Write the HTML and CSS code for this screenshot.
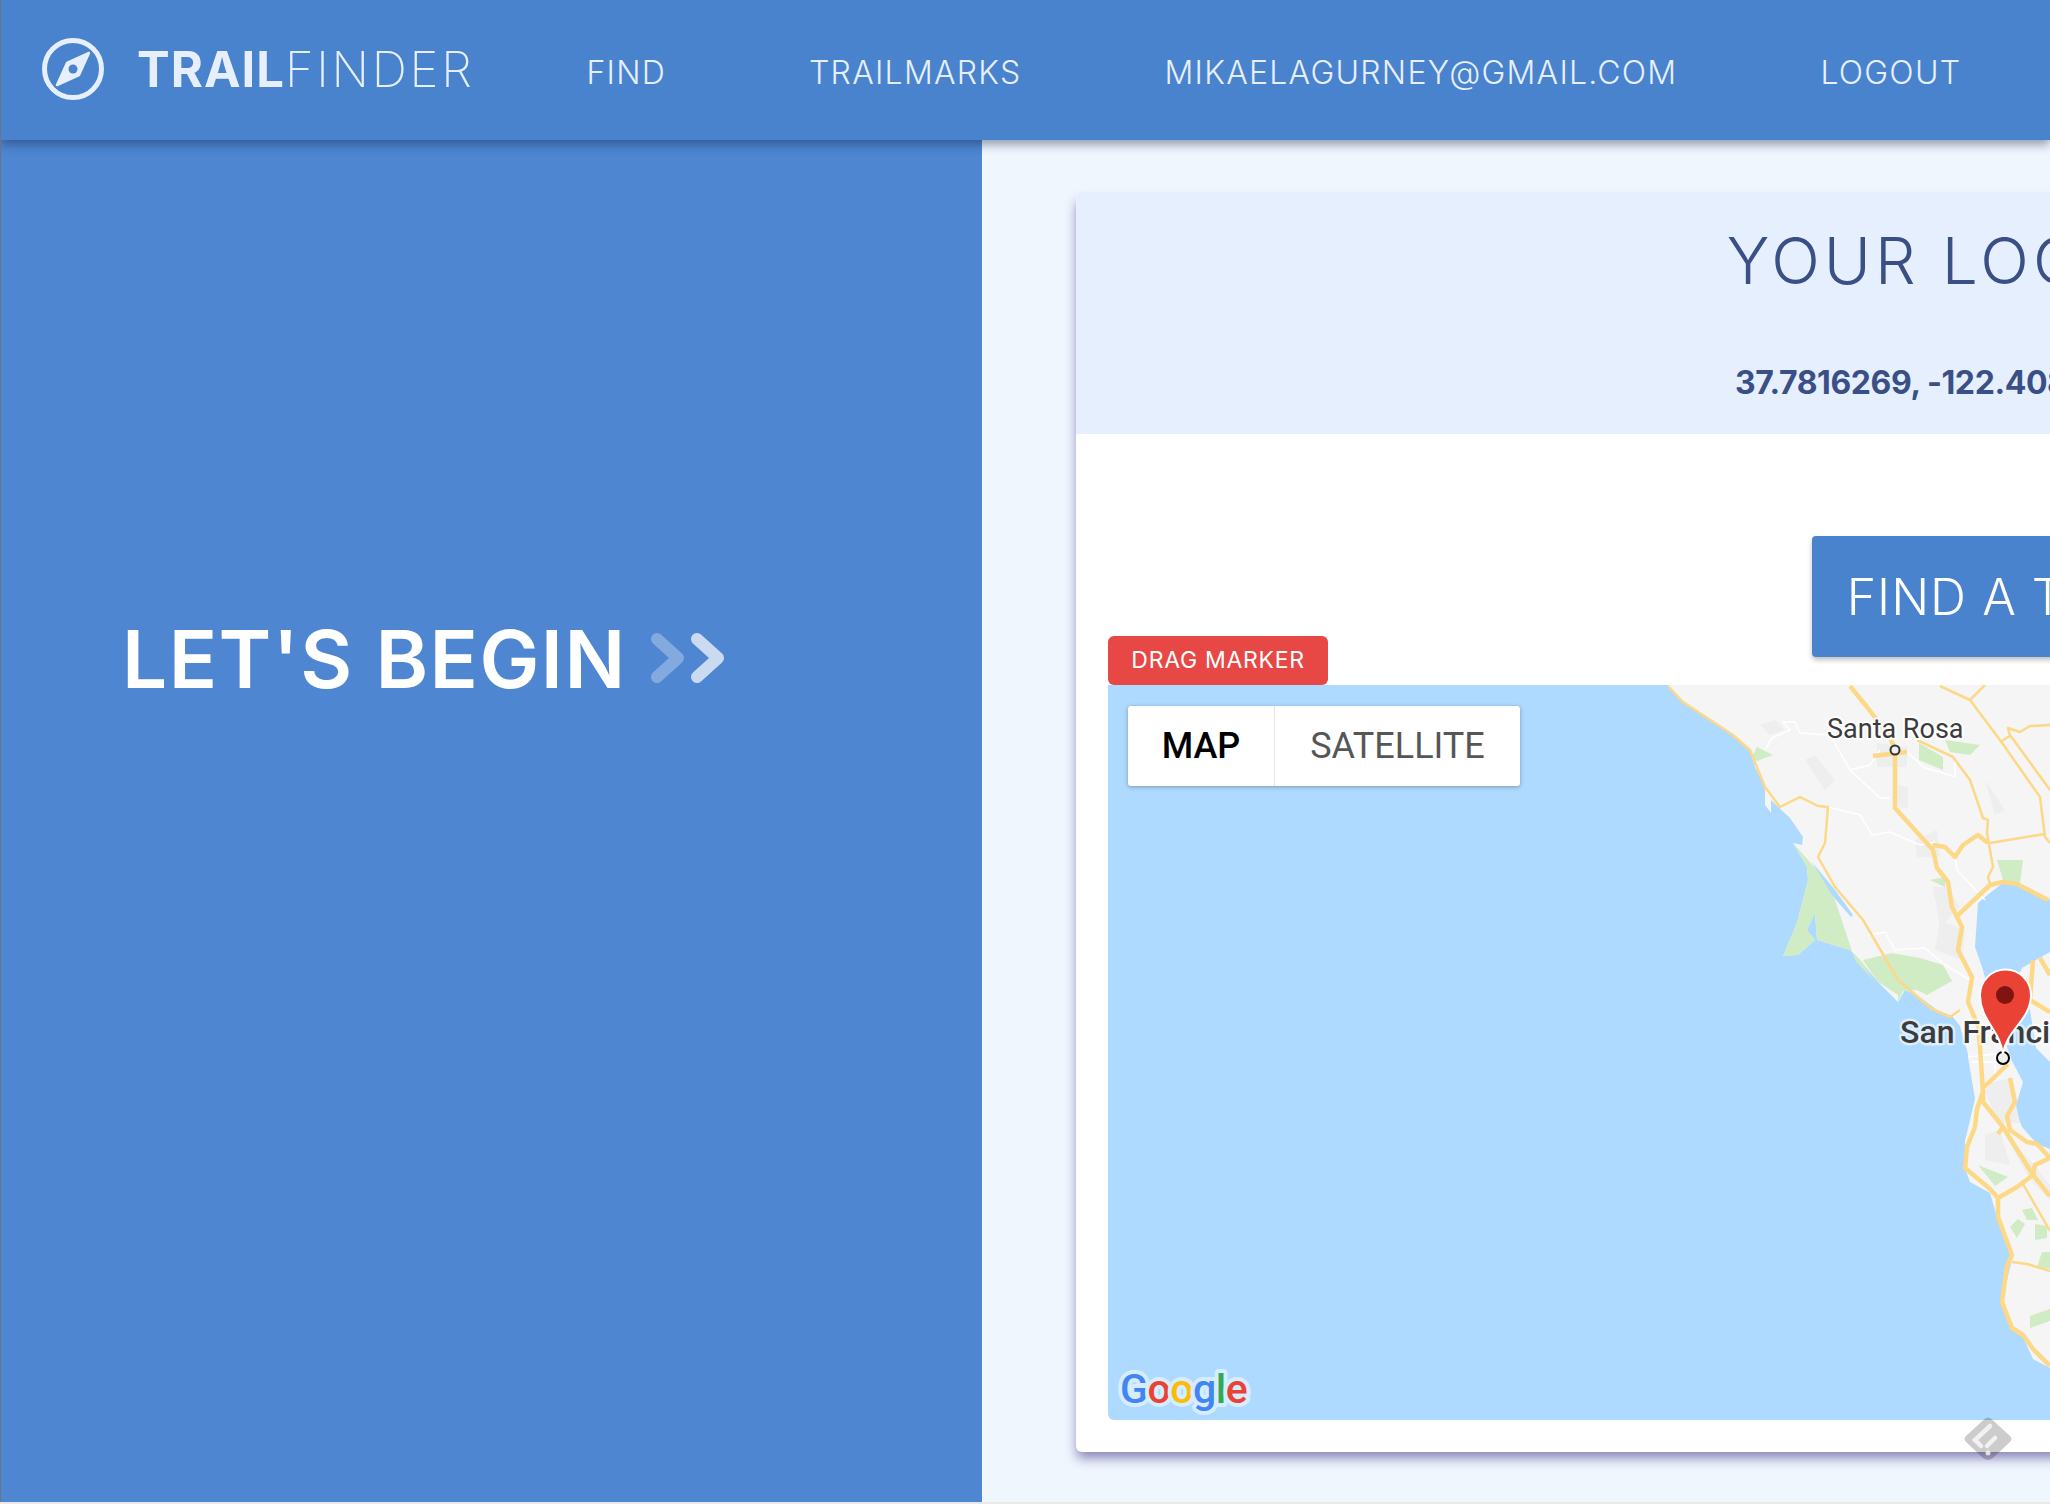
FILE: index.html
```html
<!DOCTYPE html>
<html lang="en">
<head>
    <meta charset="UTF-8">
    <title>Trailfinder</title>
    <link rel="stylesheet" href="styles.css">
</head>
<body>

<div class="app">
    <header class="topbar">
        <a class="brand">
            <svg class="compass" viewBox="0 0 64 64">
                <circle cx="32" cy="32" r="28.5" fill="none" stroke="#e6effb" stroke-width="5"/>
                <path d="M48 16 L38 38 L16 48 L26 26 Z" fill="#e6effb" stroke="#e6effb" stroke-width="2.5" stroke-linejoin="round"/>
                <circle cx="32" cy="32" r="4.5" fill="#4a83cd"/>
            </svg>
            <span class="brand-name"><b>TRAIL</b>FINDER</span>
        </a>
        <nav class="nav">
            <a>FIND</a>
            <a>TRAILMARKS</a>
            <a>MIKAELAGURNEY@GMAIL.COM</a>
            <a>LOGOUT</a>
        </nav>
    </header>

    <main class="content">
        <section class="intro">
            <h2>LET'S BEGIN</h2>
            <svg class="chevrons" viewBox="0 0 74 50">
                <polyline class="chev-back" points="6,6 27,25 6,44"/>
                <polyline class="chev-front" points="46,6 67,25 46,44"/>
            </svg>
        </section>

        <section class="finder">
            <div class="card">
                <div class="card-head">
                    <h1>YOUR LOCATION</h1>
                    <p>37.7816269, -122.40828700000001</p>
                </div>
                <div class="card-body">
                    <button class="find-btn">FIND A TRAIL</button>
                    <button class="drag-btn">DRAG MARKER</button>
                    <div class="map">
                        <svg class="map-art" width="942" height="735" viewBox="1108 685 942 735">
                            <!-- land -->
                            <polygon class="land" points="1668,685 1683,702 1713,722 1733,735 1750,750 1755,767 1765,787 1765,805 1771,813 1771,800 1790,818 1803,837 1802,845 1793,843 1807,867 1808,880 1797,923 1783,956 1798,955 1815,940 1807,930 1815,913 1817,940 1850,950 1860,960 1877,981 1898,1002 1905,990 1917,995 1937,1010 1952,1016 1960,1026 1968,1054 1968,1057 1975,1099 1965,1141 1965,1168 1970,1182 1990,1193 1997,1217 2012,1259 2002,1302 2012,1330 2023,1337 2033,1359 2050,1368 2050,685"/>
                            <polygon class="water" points="1978,903 1990,893 2003,883 2027,887 2050,900 2050,952 2022,968 2012,990 2030,1010 2036,1048 2050,1062 2050,1149 2037,1144 2022,1127 2015,1109 2023,1082 2012,1061 2006,1044 2000,1040 1990,998 1983,970 1975,947"/>
                            <polygon class="water" points="1812,862 1835,890 1853,915 1851,917 1830,893"/>
                            <!-- built up areas -->
                            <g class="urban">
                                <polygon points="1877,743 1907,747 1907,767 1877,767"/>
                                <polygon points="1898,785 1908,787 1908,808 1898,807"/>
                                <polygon points="1915,840 1937,830 1940,857 1917,857"/>
                                <polygon points="1933,887 1947,887 1960,907 1940,927"/>
                                <polygon points="1940,920 1965,930 1962,960 1935,950"/>
                                <polygon points="1983,1085 2010,1078 2020,1123 1997,1123"/>
                                <polygon points="1985,1135 2000,1130 2010,1165 1985,1160"/>
                                <polygon points="2005,1135 2030,1160 2050,1185 2050,1200 2030,1180"/>
                                <polygon points="1760,725 1775,720 1785,730 1770,735"/>
                                <polygon points="1805,760 1815,755 1835,780 1825,790"/>
                                <polygon points="1985,780 2005,810 1995,815"/>
                            </g>
                            <!-- parks -->
                            <g class="park">
                                <polygon points="1793,843 1807,867 1808,880 1797,923 1783,956 1798,955 1815,940 1807,930 1815,913 1817,940 1850,950 1863,963 1873,980 1855,960 1835,900 1817,870"/>
                                <polygon points="1752,757 1757,747 1773,755 1757,761"/>
                                <polygon points="1919,743 1943,757 1943,770 1919,760"/>
                                <polygon points="1930,880 1945,877 1945,887"/>
                                <polygon points="1997,860 2023,860 2020,883 2003,880"/>
                                <polygon points="1863,960 1877,981 1898,995 1898,1002 1903,991 1917,990 1927,995 1952,981 1943,965 1920,958 1892,953"/>
                                <polygon points="1945,740 1980,745 1970,755 1950,752"/>
                                <polygon points="1978,1165 2008,1177 1995,1186 1982,1170"/>
                                <polygon points="2022,1210 2032,1208 2038,1220 2027,1220"/>
                                <polygon points="2010,1227 2018,1219 2025,1224 2017,1238"/>
                                <polygon points="2035,1224 2047,1226 2047,1238 2035,1240"/>
                                <polygon points="2042,1252 2050,1252 2050,1269 2037,1267"/>
                                <polygon points="2030,1316 2050,1309 2050,1321 2030,1328"/>
                            </g>
                            <!-- small roads -->
                            <g class="road-white">
                                <polyline points="1765,750 1772,738 1790,730 1783,722 1795,722 1800,733 1830,735 1850,770 1880,798 1890,798"/>
                                <polyline points="1850,770 1870,765 1880,750"/>
                                <polyline points="1828,807 1860,815 1872,835 1890,832 1920,845 1935,842"/>
                                <polyline points="1907,752 1925,768 1940,772 1955,777 1955,760"/>
                                <polyline points="1955,857 1957,870 1985,900"/>
                                <polyline points="1868,935 1885,932 1895,950 1925,948 1945,965 1970,980"/>
                                <polyline points="1968,1057 1995,1054 1995,1075 1985,1090"/>
                                <polyline points="1972,1062 2000,1062"/>
                            </g>
                            <!-- highways -->
                            <g class="road">
                                <polyline points="1668,686 1683,702 1733,735 1750,750 1765,787 1780,807 1800,797 1818,806 1828,807 1825,843 1818,857 1835,887 1863,920 1898,980 1932,1009 1950,1017 1960,1010"/>
                                <polyline points="1917,740 1953,757 1970,780 1983,818 1988,820 1987,833 1993,867 1988,877 1990,884"/>
                                <polyline points="1990,843 2045,834"/>
                                <polyline points="2000,740 1970,700 1940,686"/>
                                <polyline points="2000,740 2040,797 2045,837 2050,843"/>
                                <polyline points="2010,735 2050,790"/>
                                <polyline points="2000,742 2010,736 2008,728 2020,732 2030,726 2050,725"/>
                                <polyline points="1970,700 1985,685"/>
                                <polyline points="2012,1262 2027,1264 2050,1271"/>
                                <polyline points="2023,1184 2050,1231"/>
                            </g>
                            <g class="road-wide">
                                <polyline points="1850,686 1867,707 1890,737 1895,750 1895,808 1933,850 1937,868 1948,882 1952,907 1962,927 1958,950 1972,977 1968,1002 1978,1026 1980,1047 1983,1092 1977,1109 1975,1127"/>
                                <polyline points="1873,756 1907,752"/>
                                <polyline points="1933,845 1945,847 1955,857 1963,845 1978,835 1988,843"/>
                                <polyline points="1958,915 1990,885 2003,882 2017,884 2048,900"/>
                                <polyline points="1975,1127 1967,1147 1965,1168 1990,1189 1998,1198 1998,1217 2012,1255 2007,1266 2002,1302 2012,1328 2023,1335 2033,1349 2050,1366"/>
                                <polyline points="2008,1064 1983,1088 1983,1102 2003,1127 2033,1175 2050,1196"/>
                                <polyline points="2010,1078 2015,1102 2007,1116 2010,1130 2027,1142 2037,1144 2050,1158"/>
                                <polyline points="1998,1134 2003,1127"/>
                                <polyline points="1998,1198 2017,1187 2033,1175 2035,1165 2050,1158"/>
                                <polyline points="2033,960 2030,1000 2050,1012"/>
                                <polyline points="2040,958 2050,975"/>
                            </g>
                            <!-- labels -->
                            <circle class="city-dot" cx="1895" cy="750" r="4.5"/>
                            <text class="label-small" x="1827" y="738">Santa Rosa</text>
                            <text class="label-big" x="1900" y="1043">San Francisco</text>
                            <circle class="city-dot big" cx="2003" cy="1058" r="6"/>
                            <!-- marker -->
                            <path class="pin" d="M2003 1054 C2000 1030 1980 1020 1980 995 A25.500 25.500 0 0 1 2031 995 C2031 1020 2006 1030 2003 1054 Z"/>
                            <circle class="pin-dot" cx="2005" cy="995" r="9"/>
                            <!-- logo -->
                            <text class="google" x="1120" y="1403"><tspan fill="#4285f4">G</tspan><tspan fill="#ea4335">o</tspan><tspan fill="#fbbc05">o</tspan><tspan fill="#4285f4">g</tspan><tspan fill="#34a853">l</tspan><tspan fill="#ea4335">e</tspan></text>
                        </svg>
                        <div class="map-type">
                            <span class="type-on">MAP</span>
                            <span class="type-off">SATELLITE</span>
                        </div>
                    </div>
                </div>
            </div>
        </section>
    </main>
</div>

<svg class="feedly" viewBox="0 0 48 44">
    <path d="M20.500 2 Q24 -1 27.500 2 L46 19 Q49 22 46 25 L29 41 Q24 45 19 41 L2 25 Q-1 22 2 19 Z" fill="rgba(0,0,0,0.2)"/>
    <path d="M26 9 L11 23 L17 29" fill="none" stroke="rgba(255,255,255,0.75)" stroke-width="4.500" stroke-linecap="round"/>
    <path d="M31 21 L23 29" fill="none" stroke="rgba(255,255,255,0.75)" stroke-width="4.500" stroke-linecap="round"/>
    <circle cx="24" cy="36" r="2.500" fill="rgba(255,255,255,0.75)"/>
</svg>

</body>
</html>
```

FILE: styles.css
```css
html, body {
    margin: 0;
    width: 2050px;
    height: 1504px;
    overflow: hidden;
}

body {
    background-color: #e9e9e9;
    font-family: Inter, "Liberation Sans", sans-serif;
    position: relative;
}

.app {
    height: 1502px;
    border-left: 1px solid #6d7480;
    overflow: hidden;
    display: flex;
    flex-direction: column;
}

/* top bar */
.topbar {
    flex: 0 0 140px;
    background-color: #4a83cd;
    box-shadow: 0 4px 10px rgba(20, 30, 60, 0.45);
    display: flex;
    align-items: center;
    position: relative;
    z-index: 2;
    color: #e6effb;
    white-space: nowrap;
}

.brand {
    display: flex;
    align-items: center;
    padding-left: 40px;
    margin-bottom: 2px;
}

.compass {
    width: 64px;
    height: 64px;
}

.brand-name {
    margin-left: 32px;
    font-size: 49px;
    font-weight: 200;
    letter-spacing: 2.7px;
}

.brand-name b {
    font-weight: 700;
    letter-spacing: 1px;
}

.nav {
    display: flex;
    gap: 143px;
    margin-left: 112px;
    margin-top: 4px;
    font-size: 32px;
    font-weight: 300;
    letter-spacing: 1.25px;
}

/* main area */
.content {
    flex: 1;
    display: flex;
    min-height: 0;
}

.intro {
    flex: 0 0 860px;
    background-color: #4e86d1;
    padding: 486px 0 0 121px;
    display: flex;
    align-items: flex-start;
    color: #fff;
}

.intro h2 {
    margin: 0;
    font-size: 80px;
    line-height: 66px;
    font-weight: 600;
    letter-spacing: 1.45px;
    white-space: nowrap;
}

.chevrons {
    width: 74px;
    height: 50px;
    margin: 7px 0 0 24px;
    flex-shrink: 0;
}

.chevrons polyline {
    fill: none;
    stroke: #fff;
    stroke-width: 12;
    stroke-linecap: round;
    stroke-linejoin: round;
}

.chev-back {
    opacity: 0.3;
}

.chev-front {
    opacity: 0.7;
}

.finder {
    flex: 0 0 auto;
    width: 1980px;
    background-color: #eff6fe;
    padding: 52px 0 0 94px;
    box-sizing: border-box;
}

.card {
    width: 1870px;
    height: 1260px;
    background-color: #fff;
    border-radius: 6px;
    box-shadow: -1px 8px 12px -2px rgba(70, 55, 135, 0.6);
}

.card-head {
    height: 242px;
    background-color: #e5effe;
    border-radius: 6px 6px 0 0;
    text-align: center;
    color: #3a4f85;
    overflow: hidden;
}

.card-head h1 {
    margin: 30px 0 0;
    font-size: 64px;
    line-height: 78px;
    font-weight: 350;
    letter-spacing: 4.1px;
}

.card-head p {
    margin: 63px 0 0;
    font-size: 32px;
    line-height: 40px;
    font-weight: 700;
    letter-spacing: -0.4px;
}

.card-body {
    padding: 102px 32px 0;
}

.find-btn {
    display: block;
    margin: 0 auto;
    width: 398px;
    height: 121px;
    background-color: #4a83cd;
    color: #fff;
    border: none;
    border-radius: 4px;
    box-shadow: 0 3px 5px rgba(0, 0, 0, 0.25);
    font-family: inherit;
    font-size: 50px;
    font-weight: 350;
    letter-spacing: 1px;
    padding: 0;
}

.drag-btn {
    display: block;
    margin-top: -21px;
    width: 220px;
    height: 49px;
    background-color: #e74845;
    color: #fff;
    border: none;
    border-radius: 6px;
    font-family: inherit;
    font-size: 23px;
    font-weight: 400;
    letter-spacing: 0.7px;
    padding: 0 0 2px;
}

/* map */
.map {
    position: relative;
    height: 735px;
    background-color: #aedaff;
    border-radius: 0 0 0 6px;
    overflow: hidden;
}

.map-art {
    display: block;
}

.land {
    fill: #f5f5f5;
}

.water {
    fill: #aedaff;
}

.urban polygon {
    fill: #eeeeee;
}

.park polygon {
    fill: #cfecc4;
}

.road-white polyline {
    fill: none;
    stroke: #fff;
    stroke-width: 1.5;
}

.road polyline,
.road-wide polyline {
    fill: none;
    stroke: #fcd887;
    stroke-linejoin: round;
}

.road polyline {
    stroke-width: 2.5;
}

.road-wide polyline {
    stroke-width: 4.5;
}

.city-dot {
    fill: #f0f0f0;
    stroke: #333;
    stroke-width: 2;
}

.city-dot.big {
    stroke: #000;
}

.label-small,
.label-big {
    font-family: Roboto, sans-serif;
    fill: #3c3c3c;
    stroke-linejoin: round;
    paint-order: stroke;
}

.label-small {
    font-size: 27px;
    stroke: rgba(255, 255, 255, 0.9);
    stroke-width: 4px;
}

.label-big {
    font-size: 32px;
    font-weight: 500;
    stroke: rgba(255, 255, 255, 0.55);
    stroke-width: 5px;
}

.pin {
    fill: #ea4335;
    stroke: #fff;
    stroke-width: 2;
}

.pin-dot {
    fill: #7f1410;
}

.google {
    font-family: Roboto, sans-serif;
    font-size: 41px;
    font-weight: 500;
    letter-spacing: -0.5px;
    stroke: #d6ecff;
    stroke-width: 8px;
    stroke-linejoin: round;
    paint-order: stroke;
}

.map-type {
    position: absolute;
    left: 20px;
    top: 21px;
    width: 392px;
    height: 80px;
    display: flex;
    background-color: #fff;
    border-radius: 3px;
    box-shadow: 0 1px 4px rgba(0, 0, 0, 0.3);
    font-family: Roboto, sans-serif;
    font-size: 36px;
    line-height: 80px;
    text-align: center;
}

.type-on {
    width: 146px;
    color: #000;
    font-weight: 500;
    border-right: 1px solid #e6e6e6;
}

.type-off {
    flex: 1;
    color: #565656;
}

.feedly {
    position: absolute;
    left: 1964px;
    top: 1417px;
    width: 48px;
    height: 44px;
}
```
